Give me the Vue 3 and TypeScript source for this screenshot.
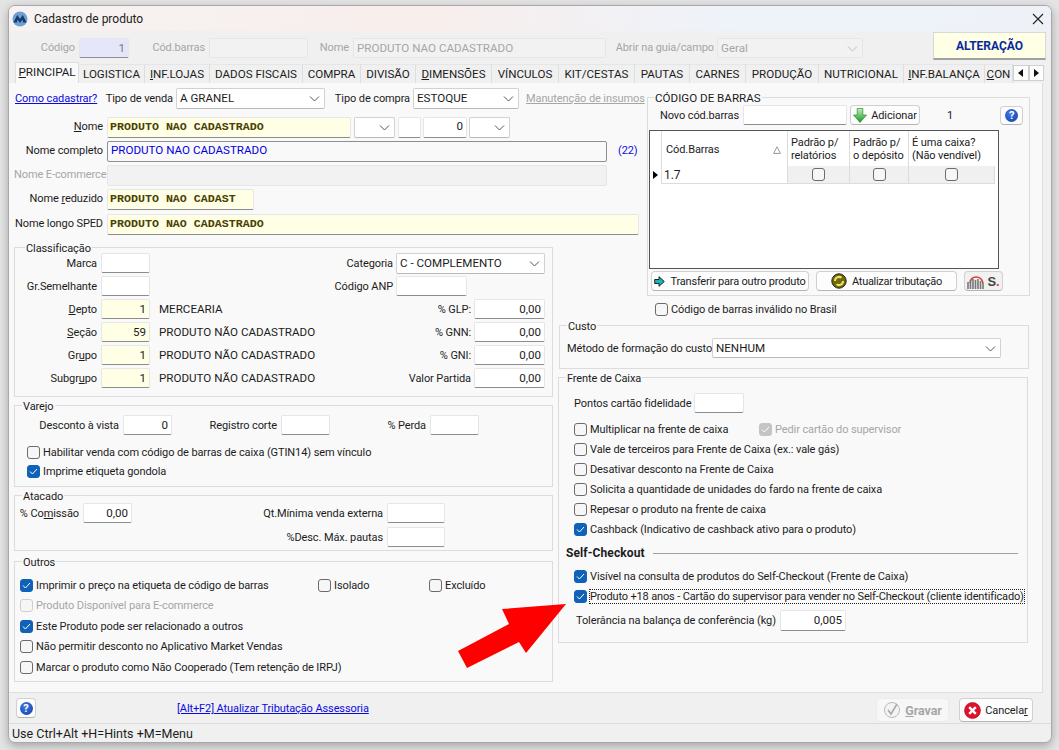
<script setup lang="ts">
type Mn = [string, string, string]

interface Tab {
  key: string
  post: string
  w: number
}

const tabs: Tab[] = [
  { key: 'P', post: 'RINCIPAL', w: 64 },
  { key: '', post: 'LOGISTICA', w: 66 },
  { key: 'I', post: 'NF.LOJAS', w: 65 },
  { key: '', post: 'DADOS FISCAIS', w: 93 },
  { key: '', post: 'COMPRA', w: 58 },
  { key: '', post: 'DIVISÃO', w: 55 },
  { key: 'D', post: 'IMENSÕES', w: 76 },
  { key: '', post: 'VÍNCULOS', w: 67 },
  { key: '', post: 'KIT/CESTAS', w: 76 },
  { key: '', post: 'PAUTAS', w: 55 },
  { key: '', post: 'CARNES', w: 56 },
  { key: '', post: 'PRODUÇÃO', w: 73 },
  { key: '', post: 'NUTRICIONAL', w: 85 },
  { key: 'I', post: 'NF.BALANÇA', w: 81 },
  { key: 'C', post: 'ON', w: 28 },
]

const classRows: { label: Mn; code: string; desc: string; pct: string }[] = [
  { label: ['', 'D', 'epto'], code: '1', desc: 'MERCEARIA', pct: '% GLP:' },
  { label: ['', 'S', 'eção'], code: '59', desc: 'PRODUTO NÃO CADASTRADO', pct: '% GNN:' },
  { label: ['Gr', 'u', 'po'], code: '1', desc: 'PRODUTO NÃO CADASTRADO', pct: '% GNI:' },
  { label: ['Subgr', 'u', 'po'], code: '1', desc: 'PRODUTO NÃO CADASTRADO', pct: 'Valor Partida' },
]

const outrosRows = [
  { text: 'Este Produto pode ser relacionado a outros', on: true },
  { text: 'Não permitir desconto no Aplicativo Market Vendas', on: false },
  { text: 'Marcar o produto como Não Cooperado (Tem retenção de IRPJ)', on: false },
]

const caixaRows = [
  { text: 'Vale de terceiros para Frente de Caixa (ex.: vale gás)', on: false },
  { text: 'Desativar desconto na Frente de Caixa', on: false },
  { text: 'Solicita a quantidade de unidades do fardo na frente de caixa', on: false },
  { text: 'Repesar o produto na frente de caixa', on: false },
  { text: 'Cashback (Indicativo de cashback ativo para o produto)', on: true },
]
</script>

<template>
  <div class="desktop">
    <div class="window">
      <header class="titlebar">
        <svg class="app-icon" width="16" height="16" viewBox="0 0 16 16">
          <circle cx="8" cy="8" r="7.5" fill="#6f9ed2" />
          <path d="M1.5 11.5 L5.2 4 L8 8 L10.8 4 L14.5 11.5 L11.2 11.5 L10.4 8.5 L8 12 L5.6 8.5 L4.8 11.5 Z" fill="#123a6c" />
        </svg>
        <span class="title">Cadastro de produto</span>
        <svg class="close" width="12" height="12" viewBox="0 0 12 12">
          <path d="M1 1 L11 11 M11 1 L1 11" stroke="#222" stroke-width="1.1" />
        </svg>
      </header>

      <div class="top-row">
        <span class="lbl off lbl-code">Código</span>
        <div class="field lav num w-code">1</div>
        <span class="lbl off lbl-barras">Cód.barras</span>
        <div class="field dis w-barras"></div>
        <span class="lbl off lbl-nome">Nome</span>
        <div class="field dis w-nome off">PRODUTO NAO CADASTRADO</div>
        <span class="lbl off lbl-abrir">Abrir na guia/campo</span>
        <div class="select dis w-abrir off">
          Geral
          <svg class="chev" width="11" height="6" viewBox="0 0 11 6"><path d="M1 .5 L5.5 5 L10 .5" fill="none" stroke="#bbb" /></svg>
        </div>
        <div class="mode">ALTERAÇÃO</div>
      </div>

      <nav class="tabs">
        <div
          v-for="(t, i) in tabs"
          :key="t.post"
          class="tab"
          :class="{ active: i === 0 }"
          :style="{ width: t.w + 'px' }"
        >
          <u v-if="t.key">{{ t.key }}</u>{{ t.post }}
        </div>
        <div class="tab-arrows">
          <span class="arrow-btn">
            <svg width="5" height="8" viewBox="0 0 5 8"><path d="M5 0 V8 L0 4 Z" fill="#111" /></svg>
          </span>
          <span class="arrow-btn">
            <svg width="5" height="8" viewBox="0 0 5 8"><path d="M0 0 V8 L5 4 Z" fill="#111" /></svg>
          </span>
        </div>
      </nav>

      <main class="panel">
        <section class="fields">
          <div class="type-row">
            <a class="link how">Como cadastrar?</a>
            <span class="lbl t-venda">Tipo de venda</span>
            <div class="select w-venda">
              A GRANEL
              <svg class="chev" width="11" height="6" viewBox="0 0 11 6"><path d="M1 .5 L5.5 5 L10 .5" fill="none" stroke="#555" /></svg>
            </div>
            <span class="lbl t-compra">Tipo de compra</span>
            <div class="select w-compra">
              ESTOQUE
              <svg class="chev" width="11" height="6" viewBox="0 0 11 6"><path d="M1 .5 L5.5 5 L10 .5" fill="none" stroke="#555" /></svg>
            </div>
            <a class="insumos">Manutenção de insumos</a>
          </div>

          <div class="name-row">
            <span class="lbl name-lbl"><u>N</u>ome</span>
            <div class="field yel mono w-name">PRODUTO NAO CADASTRADO</div>
            <div class="select w-s1">
              <svg class="chev" width="11" height="6" viewBox="0 0 11 6"><path d="M1 .5 L5.5 5 L10 .5" fill="none" stroke="#555" /></svg>
            </div>
            <div class="field w-s2"></div>
            <div class="field num w-s3">0</div>
            <div class="select w-s1">
              <svg class="chev" width="11" height="6" viewBox="0 0 11 6"><path d="M1 .5 L5.5 5 L10 .5" fill="none" stroke="#555" /></svg>
            </div>
          </div>
          <div class="name-row">
            <span class="lbl name-lbl">Nome completo</span>
            <div class="field full blue w-long">PRODUTO NAO CADASTRADO</div>
            <span class="count">(22)</span>
          </div>
          <div class="name-row">
            <span class="lbl name-lbl off">Nome E-commerce</span>
            <div class="field dis w-long"></div>
          </div>
          <div class="name-row">
            <span class="lbl name-lbl">Nome <u>r</u>eduzido</span>
            <div class="field yel mono w-red">PRODUTO NAO CADAST</div>
          </div>
          <div class="name-row sped">
            <span class="lbl name-lbl">Nome longo SPED</span>
            <div class="field yel mono w-sped">PRODUTO NAO CADASTRADO</div>
          </div>
        </section>

        <section class="left">
          <div class="group g-class">
            <span class="legend">Classificação</span>
            <div class="c-row">
              <span class="lbl c-lbl">Marca</span>
              <div class="field c-field"></div>
              <div class="c-right">
                <span class="lbl">Categoria</span>
                <div class="select w-cat">
                  C - COMPLEMENTO
                  <svg class="chev" width="11" height="6" viewBox="0 0 11 6"><path d="M1 .5 L5.5 5 L10 .5" fill="none" stroke="#555" /></svg>
                </div>
              </div>
            </div>
            <div class="c-row">
              <span class="lbl c-lbl">Gr.Semelhante</span>
              <div class="field c-field"></div>
              <div class="c-right anp">
                <span class="lbl">Código ANP</span>
                <div class="field w-anp"></div>
              </div>
            </div>
            <div v-for="r in classRows" :key="r.pct" class="c-row">
              <span class="lbl c-lbl">{{ r.label[0] }}<u>{{ r.label[1] }}</u>{{ r.label[2] }}</span>
              <div class="field yel num c-field">{{ r.code }}</div>
              <span class="c-desc">{{ r.desc }}</span>
              <div class="c-right">
                <span class="lbl">{{ r.pct }}</span>
                <div class="field num w-pct">0,00</div>
              </div>
            </div>
          </div>

          <div class="group g-varejo">
            <span class="legend">Varejo</span>
            <div class="v-row">
              <span class="lbl v-vista">Desconto à vista</span>
              <div class="field num c-field">0</div>
              <span class="lbl v-corte">Registro corte</span>
              <div class="field c-field"></div>
              <span class="lbl v-perda">% Perda</span>
              <div class="field c-field"></div>
            </div>
            <label class="check"><span class="box"></span>Habilitar venda com código de barras de caixa (GTIN14) sem vínculo</label>
            <label class="check">
              <span class="box on"><svg width="9" height="7" viewBox="0 0 9 7"><path d="M1 3.5 L3.4 6 L8 1" fill="none" stroke="#fff" /></svg></span>Imprime etiqueta gondola
            </label>
          </div>

          <div class="group g-atacado">
            <span class="legend">Atacado</span>
            <div class="a-col">
              <div class="a-first">
                <span class="lbl a-lbl">% Co<u>m</u>issão</span>
                <div class="field num c-field">0,00</div>
              </div>
              <div class="a-right">
                <div class="a-line">
                  <span class="lbl">Qt.Mínima venda externa</span>
                  <div class="field w-qt"></div>
                </div>
                <div class="a-line">
                  <span class="lbl">%Desc. Máx. pautas</span>
                  <div class="field w-qt"></div>
                </div>
              </div>
            </div>
          </div>

          <div class="group g-outros">
            <span class="legend">Outros</span>
            <div class="o-first">
              <label class="check o-main">
                <span class="box on"><svg width="9" height="7" viewBox="0 0 9 7"><path d="M1 3.5 L3.4 6 L8 1" fill="none" stroke="#fff" /></svg></span>Imprimir o preço na etiqueta de código de barras
              </label>
              <label class="check o-iso"><span class="box"></span>Isolado</label>
              <label class="check"><span class="box"></span>Excluído</label>
            </div>
            <label class="check off"><span class="box faint"></span>Produto Disponível para E-commerce</label>
            <label v-for="r in outrosRows" :key="r.text" class="check">
              <span class="box" :class="{ on: r.on }"><svg v-if="r.on" width="9" height="7" viewBox="0 0 9 7"><path d="M1 3.5 L3.4 6 L8 1" fill="none" stroke="#fff" /></svg></span>{{ r.text }}
            </label>
          </div>
        </section>

        <section class="barcode">
          <div class="group g-code">
            <span class="legend caps">CÓDIGO DE BARRAS</span>
            <div class="b-top">
              <span class="lbl b-lbl">Novo cód.barras</span>
              <div class="field w-novo"></div>
              <button class="btn b-add">
                <svg width="14" height="15" viewBox="0 0 14 15">
                  <defs>
                    <linearGradient id="gr" x1="0" y1="0" x2="0" y2="1">
                      <stop offset="0" stop-color="#c3efb4" />
                      <stop offset="1" stop-color="#129a27" />
                    </linearGradient>
                  </defs>
                  <path d="M4.2 .5 H9.8 V7 H13.5 L7 14.5 L.5 7 H4.2 Z" fill="url(#gr)" stroke="#2c8a36" stroke-width=".7" />
                </svg>
                Adicionar
              </button>
              <span class="b-count">1</span>
              <button class="btn b-help"><span class="help">?</span></button>
            </div>
            <div class="grid">
              <div class="g-head">
                <div class="g-ind"></div>
                <div class="g-col g-c1">
                  Cód.Barras
                  <svg width="8" height="8" viewBox="0 0 8 8"><path d="M4 .8 L7.4 7.4 H.6 Z" fill="none" stroke="#999" /></svg>
                </div>
                <div class="g-col g-c2">Padrão p/<br />relatórios</div>
                <div class="g-col g-c3">Padrão p/<br />o depósito</div>
                <div class="g-col g-c4">É uma caixa?<br />(Não vendível)</div>
              </div>
              <div class="g-row">
                <div class="g-ind"><svg width="5" height="8" viewBox="0 0 5 8"><path d="M0 0 V8 L5 4 Z" fill="#000" /></svg></div>
                <div class="g-cell g-c1 g-val">1.7</div>
                <div class="g-cell g-c2 shade"><span class="box"></span></div>
                <div class="g-cell g-c3 shade"><span class="box"></span></div>
                <div class="g-cell g-c4 shade"><span class="box"></span></div>
              </div>
            </div>
            <div class="b-bottom">
              <button class="btn b-transfer">
                <svg width="11" height="11" viewBox="0 0 11 11"><path d="M.7 3.5 H5 V.7 L10.3 5.5 L5 10.3 V7.5 H.7 Z" fill="#18b5c0" stroke="#111" stroke-width=".9" /></svg>
                Transferir para outro produto
              </button>
              <button class="btn b-trib">
                <svg width="16" height="16" viewBox="0 0 16 16">
                  <circle cx="8" cy="8" r="7.2" fill="#6e6a05" stroke="#222" />
                  <path d="M4 8 A4 4 0 0 1 10.5 4.8 M12 8 A4 4 0 0 1 5.5 11.2" fill="none" stroke="#f4e070" stroke-width="2" />
                </svg>
                Atualizar tributação
              </button>
              <button class="btn b-mis">
                <svg width="20" height="15" viewBox="0 0 20 15">
                  <path d="M3 9 C4 1 14 1 16 9" fill="none" stroke="#d8412f" stroke-width="1.6" />
                  <path d="M1 8 V15 M3.5 6 V15 M6 5 V15 M8.5 6 V15 M11 5 V15 M13.5 7 V15 M16 9 V15" stroke="#777" stroke-width="1.6" />
                </svg>
                <span class="mis-s">S<i>.</i></span>
              </button>
            </div>
          </div>
        </section>

        <section class="right">
          <label class="check c-invalid"><span class="box"></span>Código de barras inválido no Brasil</label>

          <div class="group g-custo">
            <span class="legend">Custo</span>
            <div class="custo-row">
              <span class="lbl m-lbl">Método de formação do custo</span>
              <div class="select w-metodo">
                NENHUM
                <svg class="chev" width="11" height="6" viewBox="0 0 11 6"><path d="M1 .5 L5.5 5 L10 .5" fill="none" stroke="#555" /></svg>
              </div>
            </div>
          </div>

          <div class="group g-caixa">
            <span class="legend">Frente de Caixa</span>
            <div class="pontos">
              <span class="lbl p-lbl">Pontos cartão fidelidade</span>
              <div class="field c-field"></div>
            </div>
            <div class="first-caixa">
              <label class="check mult"><span class="box"></span>Multiplicar na frente de caixa</label>
              <label class="check off">
                <span class="box gray"><svg width="9" height="7" viewBox="0 0 9 7"><path d="M1 3.5 L3.4 6 L8 1" fill="none" stroke="#fff" /></svg></span>Pedir cartão do supervisor
              </label>
            </div>
            <label v-for="r in caixaRows" :key="r.text" class="check">
              <span class="box" :class="{ on: r.on }"><svg v-if="r.on" width="9" height="7" viewBox="0 0 9 7"><path d="M1 3.5 L3.4 6 L8 1" fill="none" stroke="#fff" /></svg></span>{{ r.text }}
            </label>

            <div class="self">
              <strong>Self-Checkout</strong>
              <span class="self-line"></span>
            </div>
            <label class="check">
              <span class="box on"><svg width="9" height="7" viewBox="0 0 9 7"><path d="M1 3.5 L3.4 6 L8 1" fill="none" stroke="#fff" /></svg></span>Visível na consulta de produtos do Self-Checkout (Frente de Caixa)
            </label>
            <label class="check">
              <span class="box on"><svg width="9" height="7" viewBox="0 0 9 7"><path d="M1 3.5 L3.4 6 L8 1" fill="none" stroke="#fff" /></svg></span><span class="focused">Produto +18 anos - Cartão do supervisor para vender no Self-Checkout (cliente identificado)</span>
            </label>
            <div class="tol">
              <span class="lbl t-lbl">Tolerância na balança de conferência (kg)</span>
              <div class="field num w-tol">0,005</div>
            </div>
          </div>
        </section>
      </main>

      <footer class="footer">
        <button class="btn f-help"><span class="help">?</span></button>
        <a class="link f-link">[Alt+F2] Atualizar Tributação Assessoria</a>
        <button class="btn f-save" disabled>
          <svg width="18" height="18" viewBox="0 0 18 18">
            <circle cx="9" cy="9" r="7.5" fill="#f4f4f4" stroke="#bbb" />
            <path d="M5 9 L8 13 L14 3" fill="none" stroke="#aaa" stroke-width="1.6" />
          </svg>
          <span><u>G</u>ravar</span>
        </button>
        <button class="btn f-cancel">
          <svg width="17" height="17" viewBox="0 0 17 17">
            <circle cx="8.5" cy="8.5" r="8" fill="#e0112b" stroke="#a50d20" stroke-width=".6" />
            <path d="M5.2 5.2 L11.8 11.8 M11.8 5.2 L5.2 11.8" stroke="#fff" stroke-width="2.4" />
          </svg>
          <span>Cancela<u>r</u></span>
        </button>
      </footer>
      <div class="status">Use Ctrl+Alt +H=Hints +M=Menu</div>
    </div>

    <svg class="red-arrow" width="120" height="75" viewBox="0 0 120 75">
      <polygon points="108,0 44,5 51,20 0,47 9,64 61,38 68,49" fill="#fe0000" />
    </svg>
  </div>
</template>

<style>
html,
body {
  margin: 0;
  background: #d9d9d9;
}
</style>

<style scoped>
.desktop {
  position: relative;
  width: 1059px;
  height: 750px;
  overflow: hidden;
  padding: 5px 7px 6px 8px;
  box-sizing: border-box;
  background: #e4e4e4;
  font-family: Roboto, "Liberation Sans", sans-serif;
  font-size: 11px;
  letter-spacing: -0.1px;
  color: #1c1c1c;
}

.window {
  display: flex;
  flex-direction: column;
  height: 738px;
  border: 1px solid #a9a9a9;
  border-radius: 7px;
  background: #f0f0f0;
  box-sizing: border-box;
  overflow: hidden;
  box-shadow: 0 3px 10px rgba(0, 0, 0, 0.28);
}

.titlebar {
  display: flex;
  align-items: center;
  flex: none;
  height: 25px;
  padding: 0 7px 0 3px;
  background: linear-gradient(90deg, #f6f3f2, #f8eeec 40%, #eef3fa 70%, #eef2f8);
}

.app-icon {
  margin-right: 6px;
}

.title {
  font-size: 12px;
  letter-spacing: 0;
  color: #222;
}

.close {
  margin-left: auto;
}

.lbl {
  white-space: nowrap;
  flex: none;
  text-align: right;
}

.off {
  color: #a6a6a6;
}

.caps,
.field,
.select,
.tab,
.c-desc {
  font-size: 11.6px;
  letter-spacing: 0;
}

.field,
.select {
  position: relative;
  flex: none;
  box-sizing: border-box;
  height: 20px;
  line-height: 18px;
  padding: 0 3px;
  background: #fff;
  border: 1px solid #e6e6e6;
  border-bottom-color: #8c8c8c;
  border-radius: 2px;
  white-space: nowrap;
  overflow: hidden;
}

.select {
  border-color: #d2d2d2;
  border-bottom-color: #b8b8b8;
  line-height: 19px;
}

.chev {
  position: absolute;
  right: 4px;
  top: 7px;
}

.num {
  text-align: right;
}

.yel {
  background: #ffffe6;
}

.lav {
  background: #e6e6fa;
  color: #7a7a7a;
}

.dis {
  background: #f2f2f2;
  border-color: #e6e6e6;
}

.mono {
  padding-left: 2px;
  font-family: "Liberation Mono", monospace;
  font-size: 11.65px;
  font-weight: 700;
  color: #4a4000;
}

.full {
  border: 1px solid #8f8f8f;
  background: #f9f9f9;
}

.blue {
  color: #0000e0;
}

/* top strip */
.top-row {
  display: flex;
  align-items: center;
  flex: none;
  height: 32px;
  padding-top: 1px;
  box-sizing: border-box;
}

.lbl-code {
  width: 66px;
}

.w-code {
  width: 50px;
  margin-left: 4px;
}

.lbl-barras {
  width: 76px;
}

.w-barras {
  width: 99px;
  margin-left: 4px;
}

.lbl-nome {
  width: 41px;
}

.w-nome {
  width: 253px;
  margin-left: 4px;
}

.lbl-abrir {
  width: 108px;
}

.w-abrir {
  width: 146px;
  margin-left: 3px;
  border-bottom-color: #e6e6e6;
}

.mode {
  flex: none;
  align-self: flex-start;
  box-sizing: border-box;
  width: 113px;
  height: 28px;
  margin-left: 70px;
  line-height: 26px;
  text-align: center;
  font-weight: 700;
  font-size: 12px;
  letter-spacing: 0;
  color: #0a2a9c;
  background: #ffffe6;
  border: 1px solid #d8d8d8;
  border-bottom: 2px solid #a0a0a0;
}

/* tabs */
.tabs {
  display: flex;
  flex: none;
  height: 20px;
  padding-left: 6px;
  align-items: flex-end;
}

.tab {
  flex: none;
  box-sizing: border-box;
  height: 19px;
  line-height: 18px;
  text-align: center;
  overflow: hidden;
  white-space: nowrap;
  background: #f0f0f0;
  border-right: 1px solid #dedede;
  border-top: 1px solid #e6e6e6;
}

.tab.active {
  height: 21px;
  background: #f9f9f9;
  border: 1px solid #dedede;
  border-bottom: 0;
  position: relative;
}

.tab-arrows {
  display: flex;
  flex: none;
  height: 16px;
  margin-bottom: 2px;
}

.arrow-btn {
  display: flex;
  align-items: center;
  justify-content: center;
  width: 15.5px;
  background: #fdfdfd;
  border: 1px solid #d0d0d0;
  box-sizing: border-box;
}

/* tab body */
.panel {
  display: grid;
  grid-template-columns: 539px 88px 402px;
  grid-template-rows: 164px 53px 1fr;
  grid-template-areas:
    "fields fields code"
    "left . code"
    "left right right";
  flex: none;
  box-sizing: border-box;
  width: 1034px;
  height: 610px;
  padding-left: 5px;
  background: #f9f9f9;
  border-right: 1px solid #dedede;
  border-bottom: 1px solid #dedede;
}

.fields {
  grid-area: fields;
}

.left {
  grid-area: left;
  display: flex;
  flex-direction: column;
}

.barcode {
  grid-area: code;
  padding: 14px 0 0 6px;
}

.right {
  grid-area: right;
  padding-left: 5px;
}

.type-row {
  display: flex;
  align-items: center;
  height: 21px;
  margin: 4px 0 8px;
  padding-top: 1px;
}

.link {
  color: #0a0ae0;
  text-decoration: underline;
  white-space: nowrap;
}

.how {
  flex: none;
  width: 79px;
  margin-left: 1px;
}

.t-venda {
  width: 79px;
}

.w-venda {
  width: 149px;
  height: 21px;
  margin-left: 3px;
}

.t-compra {
  width: 85px;
}

.w-compra {
  width: 106px;
  height: 21px;
  margin-left: 3px;
}

.insumos {
  margin-left: 7px;
  color: #a6a6a6;
  text-decoration: underline;
  white-space: nowrap;
}

.name-row {
  display: flex;
  align-items: center;
  height: 21px;
  margin-bottom: 3px;
}

.name-row.sped {
  margin-top: 4px;
}

.name-row .field,
.name-row .select {
  height: 21px;
  line-height: 17px;
}

.name-lbl {
  width: 89px;
  margin-right: 4px;
  padding-bottom: 2px;
}

.w-name {
  width: 244px;
  margin-right: 3px;
}

.w-s1 {
  width: 41px;
}

.w-s2 {
  width: 23px;
  margin: 0 2px 0 3px;
}

.w-s3 {
  width: 44px;
  margin-right: 2px;
}

.w-long {
  width: 500px;
}

.count {
  margin-left: 11px;
  padding-bottom: 2px;
  color: #1010e0;
}

.w-red {
  width: 147px;
}

.w-sped {
  width: 532px;
}

/* group boxes */
.group {
  position: relative;
  box-sizing: border-box;
  border: 1px solid #dcdcdc;
}

.legend {
  position: absolute;
  top: -6px;
  left: 7px;
  padding: 0 1px;
  background: #f9f9f9;
  line-height: 14px;
  white-space: nowrap;
}

.g-class {
  height: 150px;
  margin-bottom: 8px;
  padding: 5px 7px 0 0;
}

.g-class .legend {
  left: 10px;
}

.c-row {
  display: flex;
  align-items: center;
  height: 20px;
  margin-bottom: 3px;
}

.c-lbl {
  width: 82px;
  margin-right: 4px;
}

.c-field {
  width: 49px;
}

.c-desc {
  margin-left: 9px;
  white-space: nowrap;
}

.c-right {
  display: flex;
  align-items: center;
  gap: 3px;
  margin-left: auto;
}

.c-right.anp {
  padding-right: 78px;
}

.w-cat {
  width: 149px;
  height: 21px;
}

.w-anp {
  width: 71px;
}

.w-pct {
  width: 71px;
}

.g-varejo {
  height: 82px;
  margin-bottom: 8px;
  padding: 9px 0 0 12px;
}

.g-varejo .check {
  height: 19px;
}

.v-row {
  display: flex;
  align-items: center;
  gap: 4px;
  margin: 0 0 8px -12px;
}

.v-vista {
  width: 104px;
}

.v-corte {
  width: 101px;
}

.v-perda {
  width: 92px;
}

.check {
  display: flex;
  align-items: center;
  height: 20px;
  white-space: nowrap;
}

.box {
  display: inline-flex;
  align-items: center;
  justify-content: center;
  flex: none;
  box-sizing: border-box;
  width: 13px;
  height: 13px;
  margin-right: 3px;
  background: #f6f6f6;
  border: 1px solid #6b6b6b;
  border-radius: 3px;
}

.box.on {
  background: #0f62b8;
  border-color: #0f62b8;
}

.box.gray {
  background: #c4c4c4;
  border-color: #c4c4c4;
}

.box.faint {
  border-color: #cfcfcf;
}

.g-atacado {
  height: 56px;
  margin-bottom: 10px;
  padding: 7px 0 0;
}

.a-col {
  display: flex;
}

.a-first {
  display: flex;
  align-items: center;
  gap: 4px;
  height: 20px;
}

.a-lbl {
  width: 64px;
}

.a-right {
  margin-left: auto;
  padding-right: 107px;
}

.a-line {
  display: flex;
  align-items: center;
  justify-content: flex-end;
  gap: 4px;
  height: 20px;
  margin-bottom: 4px;
}

.w-qt {
  width: 58px;
}

.g-outros {
  height: 121px;
  padding: 13px 0 0 5px;
}

.g-outros .check {
  height: 20.5px;
}

.o-first {
  display: flex;
}

.o-main {
  width: 298px;
}

.o-iso {
  width: 111px;
}

/* barcode */
.g-code {
  width: 383px;
  height: 199px;
}

.g-code .legend {
  top: -7px;
  left: 6px;
}

.b-top {
  display: flex;
  align-items: center;
  height: 20px;
  margin: 7px 0 5px 12px;
}

.b-lbl {
  width: 83px;
  text-align: left;
}

.w-novo {
  width: 104px;
}

.btn {
  display: inline-flex;
  align-items: center;
  justify-content: center;
  flex: none;
  box-sizing: border-box;
  padding: 0;
  font: inherit;
  letter-spacing: inherit;
  color: inherit;
  background: #fdfdfd;
  border: 1px solid #d0d0d0;
  border-bottom-color: #b4b4b4;
  border-radius: 4px;
}

.btn svg {
  flex: none;
}

.b-add {
  width: 70px;
  height: 20px;
  gap: 4px;
  margin-left: 3px;
}

.b-count {
  margin-left: 27px;
}

.b-help {
  width: 23px;
  height: 19px;
  margin-left: 47px;
}

.help {
  display: block;
  width: 13px;
  height: 13px;
  line-height: 13px;
  border-radius: 50%;
  background: radial-gradient(circle at 40% 35%, #3f78e0, #123ca8);
  color: #fff;
  font-size: 11px;
  font-weight: 700;
  text-align: center;
}

.grid {
  box-sizing: border-box;
  width: 350px;
  height: 139px;
  margin-left: 1px;
  background: #fff;
  border: 1px solid #555;
}

.g-head,
.g-row {
  display: flex;
}

.g-head {
  height: 35px;
}

.g-row {
  height: 18px;
}

.g-ind {
  display: flex;
  align-items: center;
  justify-content: center;
  flex: none;
  box-sizing: border-box;
  width: 12px;
  border-right: 1px solid #dcdcdc;
}

.g-col {
  flex: none;
  box-sizing: border-box;
  padding: 5px 3px;
  line-height: 13px;
  white-space: nowrap;
  border-right: 1px solid #dcdcdc;
}

.g-c1 {
  width: 126px;
}

.g-c2 {
  width: 62px;
}

.g-c3 {
  width: 59px;
}

.g-c4 {
  width: 86px;
  border-right: 0;
}

.g-head .g-c1 {
  display: flex;
  align-items: center;
  justify-content: space-between;
  padding: 2px 6px 0 4px;
}

.g-cell {
  display: flex;
  align-items: center;
  justify-content: center;
  flex: none;
  box-sizing: border-box;
  border-bottom: 1px solid #dcdcdc;
  border-right: 1px solid #dcdcdc;
}

.g-cell .box {
  margin: 0;
}

.g-val {
  justify-content: flex-start;
  padding: 1px 0 0 2px;
  font-size: 12px;
}

.shade {
  background: #f0f0f0;
}

.b-bottom {
  display: flex;
  align-items: center;
  gap: 7px;
  margin: 2px 0 0 3px;
}

.b-bottom .btn {
  height: 20px;
  white-space: nowrap;
}

.b-transfer {
  width: 158px;
  gap: 5px;
  letter-spacing: -0.2px;
}

.b-trib {
  width: 141px;
  gap: 5px;
  letter-spacing: -0.3px;
}

.b-mis {
  width: 39px;
  background: #f1f1f1;
}

.mis-s {
  font-family: "Liberation Sans", sans-serif;
  font-weight: 700;
  font-size: 13px;
  color: #444;
}

.mis-s i {
  font-style: normal;
  color: #d8412f;
}

.c-invalid {
  height: 18px;
  margin: 0 0 7px 97px;
}

.g-custo {
  width: 470px;
  height: 44px;
  margin-left: 1px;
  margin-bottom: 8px;
}

.custo-row {
  display: flex;
  align-items: center;
  gap: 3px;
  margin: 12px 0 0 7px;
}

.m-lbl {
  width: 142px;
  text-align: left;
}

.w-metodo {
  width: 289px;
}

.g-caixa {
  width: 470px;
  height: 266px;
  padding: 15px 0 0 15px;
}

.pontos {
  display: flex;
  align-items: center;
  gap: 6px;
  margin-bottom: 6px;
}

.p-lbl {
  width: 114px;
  text-align: left;
}

.pontos .c-field {
  width: 50px;
}

.first-caixa {
  display: flex;
}

.mult {
  width: 185px;
}

.self {
  display: flex;
  align-items: center;
  height: 16px;
  margin: 6px 0 5px -8px;
}

.self strong {
  font-size: 12px;
  letter-spacing: 0.1px;
}

.self-line {
  width: 365px;
  height: 1px;
  margin-left: auto;
  margin-right: 9px;
  background: #a0a0a0;
}

.focused {
  outline: 1px dotted #222;
  letter-spacing: -0.145px;
}

.tol {
  display: flex;
  align-items: center;
  gap: 4px;
  margin: 4px 0 0 2px;
}

.tol .field {
  height: 21px;
  line-height: 19px;
}

.t-lbl {
  width: 200px;
  text-align: left;
}

.w-tol {
  width: 66px;
}

/* bottom */
.footer {
  display: flex;
  align-items: center;
  flex: none;
  height: 30px;
  padding-left: 7px;
}

.f-help {
  width: 20px;
  height: 20px;
}

.f-link {
  margin-left: 141px;
}

.f-save,
.f-cancel {
  align-self: flex-start;
  height: 24px;
  gap: 4px;
  margin-top: 5px;
}

.f-save {
  width: 73px;
  margin-left: auto;
  color: #a6a6a6;
  font-size: 12.5px;
  font-weight: 700;
  background: #f7f7f7;
  border-color: #ececec;
}

.f-cancel {
  width: 74px;
  margin-left: 10px;
  margin-right: 18px;
}

.status {
  flex: none;
  height: 19px;
  line-height: 20px;
  padding-left: 3px;
  font-size: 12.5px;
  letter-spacing: 0;
  border-top: 1px solid #dcdcdc;
  box-sizing: border-box;
}

.red-arrow {
  position: absolute;
  left: 458px;
  top: 604px;
}
</style>
